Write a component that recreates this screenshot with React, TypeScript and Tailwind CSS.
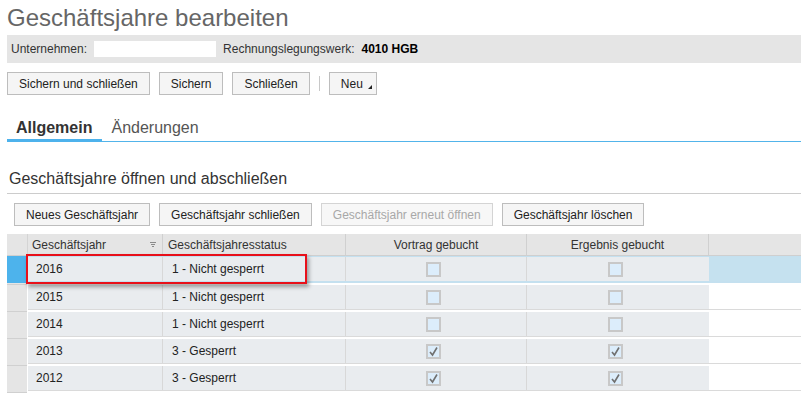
import React from 'react';

interface FiscalYear {
  year: string;
  status: string;
  booked: boolean;
}

const years: FiscalYear[] = [
  { year: '2016', status: '1 - Nicht gesperrt', booked: false },
  { year: '2015', status: '1 - Nicht gesperrt', booked: false },
  { year: '2014', status: '1 - Nicht gesperrt', booked: false },
  { year: '2013', status: '3 - Gesperrt', booked: true },
  { year: '2012', status: '3 - Gesperrt', booked: true },
];

const Button: React.FC<{ label: string; disabled?: boolean; menu?: boolean }> = ({ label, disabled, menu }) => {
  return (
    <button
      className={
        disabled
          ? 'relative h-[23px] border border-[#d4d4d4] bg-[#f7f7f7] px-[11px] text-[12px] leading-none text-[#a8a8a8]'
          : 'relative h-[23px] border border-[#bdbdbd] bg-[#f5f5f5] px-[11px] text-[12px] leading-none text-[#222]'
      }
    >
      <span className={menu ? 'pr-[2px]' : ''}>{label}</span>
      {menu && (
        <svg className="absolute right-[4px] bottom-[5px]" width="4" height="4" viewBox="0 0 4 4">
          <polygon points="4,0 4,4 0,4" fill="#222" />
        </svg>
      )}
    </button>
  );
};

const Checkbox: React.FC<{ checked: boolean }> = ({ checked }) => {
  return (
    <div className="w-[15px] h-[15px] border-2 border-[#c8c8c8] bg-[#dcedfb] flex items-center justify-center">
      {checked && (
        <svg width="11" height="11" viewBox="0 0 11 11">
          <path d="M2 6 L4.5 9 L9 1.5" fill="none" stroke="#707070" strokeWidth="1.6" />
        </svg>
      )}
    </div>
  );
};

const Row: React.FC<{ item: FiscalYear; selected?: boolean }> = ({ item, selected }) => {
  return (
    <div className="flex">
      <div className="w-[21px] border-r border-white flex flex-col">
        <div className={selected ? 'h-[27px] bg-[#4db3ec]' : 'h-[26px] bg-[#e5e5e5]'} />
        <div className="flex-1 bg-[#e5e5e5] border-b border-[#d0d0d0]" />
      </div>
      <div className="flex-1 flex flex-col">
        <div
          className={
            selected
              ? 'flex h-[27px] border-t border-b-2 border-[#c4e0ef]'
              : 'flex h-[25px] border-b border-[#dadada]'
          }
        >
          <div className="w-[135px] border-r border-[#d8d8d8] bg-[#e9ecef] pl-[8px] flex items-center">{item.year}</div>
          <div className="w-[183px] border-r border-[#d8d8d8] bg-[#e9ecef] pl-[9px] flex items-center">{item.status}</div>
          <div className="w-[181px] border-r border-[#d8d8d8] bg-[#e9ecef] pr-[6px] flex items-center justify-center">
            <Checkbox checked={item.booked} />
          </div>
          <div className="w-[182px] bg-[#e9ecef] pr-[5px] flex items-center justify-center">
            <Checkbox checked={item.booked} />
          </div>
          <div className={selected ? 'flex-1 bg-[#c5e1ef]' : 'flex-1 bg-white'} />
        </div>
        <div className="h-[2px] bg-white" />
      </div>
    </div>
  );
};

export default function App() {
  return (
    <div className="w-[801px] h-[394px] overflow-hidden bg-white text-[#333] font-['Liberation_Sans',Arial,sans-serif]">
      <h1 className="pl-[7px] pt-[4px] text-[24px] leading-[28px] text-[#666]">Geschäftsjahre bearbeiten</h1>

      <div className="ml-[7px] mt-[3px] h-[28px] bg-[#e5e5e5] flex items-center pl-[4px] text-[12px]">
        <span>Unternehmen:</span>
        <div className="ml-[7px] w-[122px] h-[16px] bg-white" />
        <span className="ml-[7px]">Rechnungslegungswerk:</span>
        <span className="ml-[7px] font-bold text-black">4010 HGB</span>
      </div>

      <div className="ml-[7px] mt-[9px] flex items-center gap-[9px]">
        <Button label="Sichern und schließen" />
        <Button label="Sichern" />
        <Button label="Schließen" />
        <div className="w-px h-[15px] bg-[#c8c8c8]" />
        <Button label="Neu" menu />
      </div>

      <div className="ml-[7px] mt-[18px] flex items-end border-b border-[#52b4ea]">
        <div className="-mb-px pl-[9px] pr-[10px] pt-[6px] pb-[2px] border-b-[3px] border-[#4db2ec] text-[16px] leading-[18px] font-bold text-[#333]">
          Allgemein
        </div>
        <div className="pl-[9px] pt-[6px] pb-[4px] text-[16px] leading-[18px] text-[#555]">Änderungen</div>
      </div>

      <div className="ml-[7px] mt-[28px] pl-[2px] pb-[5px] border-b border-[#cccccc] text-[16px] leading-[18px] text-[#333]">
        Geschäftsjahre öffnen und abschließen
      </div>

      <div className="ml-[14px] mt-[9px] flex gap-[9px]">
        <Button label="Neues Geschäftsjahr" />
        <Button label="Geschäftsjahr schließen" />
        <Button label="Geschäftsjahr erneut öffnen" disabled />
        <Button label="Geschäftsjahr löschen" />
      </div>

      <div className="relative ml-[7px] mt-[8px] text-[12px] text-[#222]">
        <div className="flex h-[22px] bg-[#e5e5e5] border-b border-[#cfcfcf] text-[#333]">
          <div className="w-[21px] border-r border-[#d4d4d4]" />
          <div className="w-[135px] border-r border-[#d0d0d0] pl-[4px] pr-[6px] flex items-center justify-between">
            <span>Geschäftsjahr</span>
            <svg width="6" height="5" viewBox="0 0 6 5">
              <rect x="0" y="0" width="6" height="1" fill="#8a8a8a" />
              <rect x="1" y="2" width="4" height="1" fill="#8a8a8a" />
              <rect x="2" y="4" width="2" height="1" fill="#8a8a8a" />
            </svg>
          </div>
          <div className="w-[183px] border-r border-[#d0d0d0] pl-[5px] flex items-center">Geschäftsjahresstatus</div>
          <div className="w-[181px] border-r border-[#d0d0d0] flex items-center justify-center">Vortrag gebucht</div>
          <div className="w-[182px] border-r border-[#d0d0d0] flex items-center justify-center">Ergebnis gebucht</div>
          <div className="flex-1" />
        </div>

        {years.map((item, i) => (
          <Row key={item.year} item={item} selected={i === 0} />
        ))}

        <div className="absolute left-[19px] top-[20px] w-[281px] h-[30px] border-2 border-[#e8101a] shadow-[2px_3px_4px_rgba(0,0,0,0.35)]" />
      </div>
    </div>
  );
}
